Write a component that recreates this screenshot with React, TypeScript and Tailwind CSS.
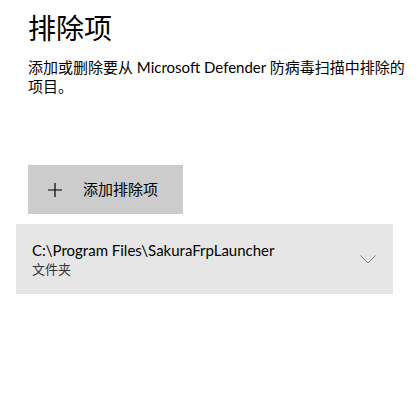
import React from 'react';

const font = { fontFamily: 'Lato, "Noto Sans CJK SC", sans-serif' };

function Exclusion({ path, kind }: { path: string; kind: string }) {
  return (
    <div className="flex h-[70px] w-[377px] items-center justify-between bg-[#e6e6e6] pl-4 pr-4">
      <div className="flex flex-col">
        <span className="text-[15px] leading-[19px] text-black">{path}</span>
        <span className="text-[13px] leading-[18px] text-[#333]">{kind}</span>
      </div>
      <svg width="16" height="9" viewBox="0 0 16 9" className="mr-[1px]">
        <path d="M0.5 0.5 L8 8 L15.5 0.5" fill="none" stroke="#7a7a7a" strokeWidth="1" />
      </svg>
    </div>
  );
}

export default function App() {
  return (
    <div className="min-h-screen w-[419px] bg-white text-black" style={font}>
      <div className="pl-7 pr-3 pt-[8px]">
        <h1 className="text-[28px] leading-[40px] font-normal">排除项</h1>
        <p className="mt-[10px] text-[15px] leading-[19px]">
          添加或删除要从 Microsoft Defender 防病毒扫描中排除的项目。
        </p>
      </div>
      <div className="mt-[69px] pl-7">
        <button className="flex h-[49px] w-[155px] items-center bg-[#cccccc] pl-5 text-[15px]">
          <svg width="14" height="14" viewBox="0 0 14 14">
            <path d="M7 0 V14 M0 7 H14" stroke="#000" strokeWidth="1.2" fill="none" />
          </svg>
          <span className="ml-[21px]">添加排除项</span>
        </button>
      </div>
      <div className="mt-[10px] pl-4">
        <Exclusion path="C:\Program Files\SakuraFrpLauncher" kind="文件夹" />
      </div>
    </div>
  );
}
